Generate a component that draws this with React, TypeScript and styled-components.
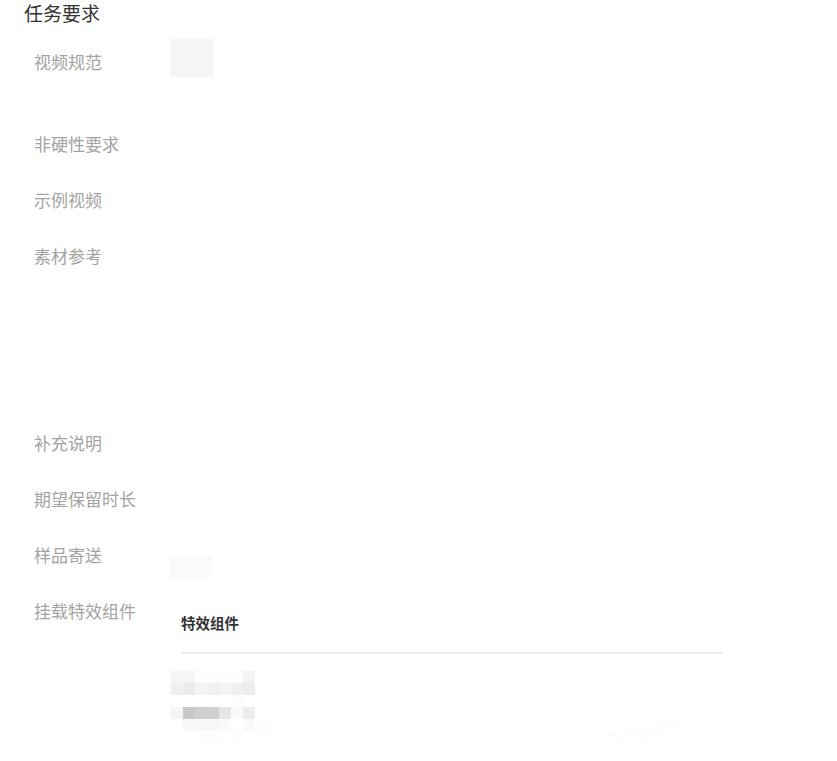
import * as React from 'react'
import styled, {createGlobalStyle} from 'styled-components'

const GlobalStyle = createGlobalStyle`
  html, body {
    margin: 0;
    padding: 0;
    background: #fff;
  }
  body {
    font-family: "Noto Sans CJK SC", "Noto Sans", sans-serif;
  }
`

const Page = styled.div`
  position: relative;
  width: 837px;
  height: 761px;
  overflow: hidden;
  padding: 1px 24px 0;
  box-sizing: border-box;
`

const Title = styled.div`
  font-size: 19px;
  line-height: 24px;
  color: #333;
  margin: 0 0 14px;
`

const Form = styled.div`
  display: flex;
  flex-direction: column;
  gap: 22px;
  padding-left: 10px;
`

type ItemProps = {
    minHeight?: number
}

const Item = styled.div<ItemProps>`
  display: flex;
  min-height: ${({minHeight}) => minHeight || 34}px;
`

const Label = styled.div`
  width: 136px;
  flex-shrink: 0;
  padding-top: 12px;
  font-size: 17px;
  line-height: 22px;
  color: #a3a3a3;
`

const Content = styled.div`
  flex: 1;
  display: flex;
  flex-direction: column;
`

type PlaceholderProps = {
    w: number
    h: number
    bg: string
    top?: number
    bottom?: number
}

const Placeholder = styled.div<PlaceholderProps>`
  width: ${({w}) => w}px;
  height: ${({h}) => h}px;
  margin-top: ${({top}) => top || 0}px;
  margin-bottom: ${({bottom}) => bottom || 0}px;
  background: ${({bg}) => bg};
`

const Panel = styled.div`
  width: 553px;
  padding-top: 24px;
`

const PanelHeader = styled.div`
  margin-left: 11px;
  padding-bottom: 18px;
  border-bottom: 2px solid #ededed;
  font-size: 14.5px;
  line-height: 22px;
  font-weight: 700;
  color: #333;
`

const Mosaic = styled.div`
  display: grid;
  grid-template-columns: repeat(7, 12px);
  grid-auto-rows: 12px;
  margin: 17px 0 0 1px;
`

const Cell = styled.div<{bg: string}>`
  background: ${({bg}) => bg};
`

const Watermark = styled.div`
  position: absolute;
  font-family: "Liberation Sans", sans-serif;
  font-size: 16px;
  color: rgba(0, 0, 0, 0.03);
  transform: rotate(-12deg);
  pointer-events: none;
  white-space: nowrap;
`

const mosaicRows = [
    ['#f5f5f5', '#f5f5f5', '#fdfdfd', '#fdfdfd', '#fdfdfd', '#fdfdfd', '#f3f3f3'],
    ['#f0f0f0', '#ebebeb', '#f3f3f3', '#f0f0f0', '#f3f3f3', '#f0f0f0', '#ececec'],
    ['#fff', '#fff', '#fff', '#fff', '#fff', '#fcfcfc', '#fff'],
    ['#f5f5f5', '#c8c8cc', '#cfcfd2', '#d0d0d3', '#e6e6e6', '#fafafa', '#ededed'],
    ['#fff', '#f8f8f8', '#f8f8f8', '#f8f8f8', '#fafafa', '#fff', '#fafafa'],
]

export default function App() {
    return (
        <>
            <GlobalStyle />
            <Page>
                <Title>任务要求</Title>
                <Form>
                    <Item>
                        <Label>视频规范</Label>
                        <Content>
                            <Placeholder w={43} h={38} bg="#f5f5f5" bottom={22} />
                        </Content>
                    </Item>
                    <Item>
                        <Label>非硬性要求</Label>
                    </Item>
                    <Item>
                        <Label>示例视频</Label>
                    </Item>
                    <Item minHeight={165}>
                        <Label>素材参考</Label>
                    </Item>
                    <Item>
                        <Label>补充说明</Label>
                    </Item>
                    <Item>
                        <Label>期望保留时长</Label>
                    </Item>
                    <Item>
                        <Label>样品寄送</Label>
                        <Content>
                            <Placeholder w={42} h={22} bg="#fafafa" top={24} bottom={-12} />
                        </Content>
                    </Item>
                    <Item>
                        <Label>挂载特效组件</Label>
                        <Content>
                            <Panel>
                                <PanelHeader>特效组件</PanelHeader>
                                <Mosaic>
                                    {mosaicRows.flatMap((row, r) =>
                                        row.map((c, i) => <Cell key={`${r}_${i}`} bg={c} />)
                                    )}
                                </Mosaic>
                            </Panel>
                        </Content>
                    </Item>
                </Form>
                <Watermark style={{left: 195, top: 724}}>zhangyang</Watermark>
                <Watermark style={{left: 600, top: 722}}>zhangyang</Watermark>
            </Page>
        </>
    )
}
